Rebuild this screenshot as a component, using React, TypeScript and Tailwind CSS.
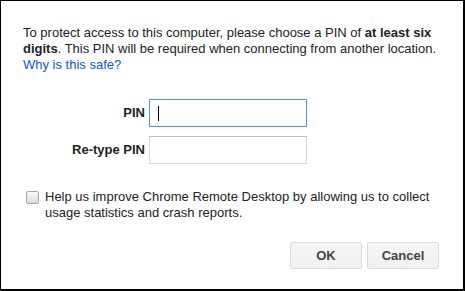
import React, { useState } from 'react';

const App = () => {
	const [pin, setPin] = useState('');
	const [pinAgain, setPinAgain] = useState('');
	const [stats, setStats] = useState(false);

	return (
		<div className="w-[465px] h-[291px] bg-white border-l border-t border-r-2 border-b-2 border-black text-[13px] leading-4 text-[#222] font-['Liberation_Sans',Arial,sans-serif] flex flex-col">
			{/* explanation */}
			<p className="pl-[22px] pr-[20px] pt-[24px]">
				To protect access to this computer, please choose a PIN of <b>at least six</b> <b>digits</b>. This PIN
				will be required when connecting from another location.{' '}
				<a href="#" className="text-[#15c]">
					Why is this safe?
				</a>
			</p>

			{/* pin fields */}
			<div className="mt-[26px] grid grid-cols-[144px_158px] gap-x-[4px] gap-y-[9px] items-center">
				<label htmlFor="pin" className="text-right font-bold">
					PIN
				</label>
				<div className="relative h-[28px] border border-[#4d90fe] flex items-center">
					<input
						id="pin"
						type="password"
						className="w-full h-full outline-none px-[8px]"
						value={pin}
						onChange={(e) => setPin(e.target.value)}
					/>
					{pin === '' && <span className="absolute left-[8px] top-[6px] w-px h-[15px] bg-black" />}
				</div>
				<label htmlFor="pin-again" className="text-right font-bold">
					Re-type PIN
				</label>
				<input
					id="pin-again"
					type="password"
					className="h-[28px] border border-[#d9d9d9] border-t-[#c0c0c0] outline-none px-2"
					value={pinAgain}
					onChange={(e) => setPinAgain(e.target.value)}
				/>
			</div>

			{/* usage stats */}
			<label className="mt-[25px] pl-[25px] pr-[20px] flex items-start gap-[6px]">
				<input
					type="checkbox"
					className="appearance-none mt-[2px] w-[13px] h-[13px] shrink-0 rounded-[2px] border border-[#a5a5a5] bg-gradient-to-b from-[#fafafa] to-[#dcdcdc]"
					checked={stats}
					onChange={(e) => setStats(e.target.checked)}
				/>
				<span>
					Help us improve Chrome Remote Desktop by allowing us to collect usage statistics and crash reports.
				</span>
			</label>

			{/* buttons */}
			<div className="mt-[21px] pr-[24px] flex justify-end gap-[5px]">
				<button className="w-[72px] h-[27px] rounded-[2px] border border-[#dcdcdc] bg-gradient-to-b from-[#f5f5f5] to-[#f1f1f1] font-bold text-[#444] text-[13px]">
					OK
				</button>
				<button className="w-[72px] h-[27px] rounded-[2px] border border-[#dcdcdc] bg-gradient-to-b from-[#f5f5f5] to-[#f1f1f1] font-bold text-[#444] text-[13px]">
					Cancel
				</button>
			</div>
		</div>
	);
};

export default App;
